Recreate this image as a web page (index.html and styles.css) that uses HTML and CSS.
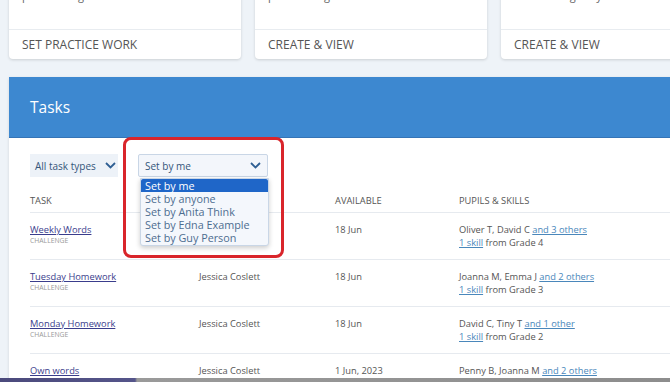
FILE: index.html
```html
<!DOCTYPE html>
<html lang="en">
<head>
  <meta charset="UTF-8">
  <meta name="viewport" content="width=device-width, initial-scale=1.0">
  <title>Tasks</title>
  <link rel="stylesheet" href="styles.css">
</head>
<body>
  <div class="page">
    <div class="cards">
      <div class="card">
        <div class="card-body">practice in games.</div>
        <div class="card-footer">Set practice work</div>
      </div>
      <div class="card">
        <div class="card-body">practice in games.</div>
        <div class="card-footer">Create &amp; view</div>
      </div>
      <div class="card">
        <div class="card-body">the marking for you.</div>
        <div class="card-footer">Create &amp; view</div>
      </div>
    </div>

    <div class="panel">
      <div class="panel-header">
        <h2>Tasks</h2>
      </div>
      <div class="panel-body">
        <div class="filters">
          <div class="filter filter-plain">
            <span>All task types</span>
            <svg class="chevron" width="11" height="7" viewBox="0 0 11 7"><polyline points="1,1 5.5,5.5 10,1" fill="none" stroke="#2f5f93" stroke-width="1.8"/></svg>
          </div>
          <div class="select-wrap">
            <div class="filter filter-select">
              <span>Set by me</span>
              <svg class="chevron" width="11" height="7" viewBox="0 0 11 7"><polyline points="1,1 5.5,5.5 10,1" fill="none" stroke="#2f5f93" stroke-width="1.8"/></svg>
            </div>
            <ul class="dropdown">
              <li class="selected">Set by me</li>
              <li>Set by anyone</li>
              <li>Set by Anita Think</li>
              <li>Set by Edna Example</li>
              <li>Set by Guy Person</li>
            </ul>
            <div class="highlight"></div>
          </div>
        </div>

        <table class="table">
          <thead>
            <tr>
              <th class="col-task">Task</th>
              <th class="col-by">Set by</th>
              <th class="col-date">Available</th>
              <th>Pupils &amp; skills</th>
            </tr>
          </thead>
          <tbody>
            <tr>
              <td><a href="#">Weekly Words</a><div class="type">Challenge</div></td>
              <td>Jessica Coslett</td>
              <td>18 Jun</td>
              <td>Oliver T, David C <a class="more" href="#">and 3 others</a><br><a class="more" href="#">1 skill</a> from Grade 4</td>
            </tr>
            <tr>
              <td><a href="#">Tuesday Homework</a><div class="type">Challenge</div></td>
              <td>Jessica Coslett</td>
              <td>18 Jun</td>
              <td>Joanna M, Emma J <a class="more" href="#">and 2 others</a><br><a class="more" href="#">1 skill</a> from Grade 3</td>
            </tr>
            <tr>
              <td><a href="#">Monday Homework</a><div class="type">Challenge</div></td>
              <td>Jessica Coslett</td>
              <td>18 Jun</td>
              <td>David C, Tiny T <a class="more" href="#">and 1 other</a><br><a class="more" href="#">1 skill</a> from Grade 2</td>
            </tr>
            <tr>
              <td><a href="#">Own words</a><div class="type">Challenge</div></td>
              <td>Jessica Coslett</td>
              <td>1 Jun, 2023</td>
              <td>Penny B, Joanna M <a class="more" href="#">and 2 others</a><br><a class="more" href="#">1 skill</a> from Grade 1</td>
            </tr>
          </tbody>
        </table>
      </div>
    </div>
  </div>
  <div class="taskbar"></div>
</body>
</html>
```

FILE: styles.css
```css
body {
  font-family: "Open Sans", Arial, sans-serif;
  background-color: #eef3f8;
  margin: 0;
  height: 382px;
  overflow: hidden;
  position: relative;
}

.page {
  padding-left: 9px;
  width: 760px;
}

.cards {
  display: flex;
  gap: 14px;
  margin-top: -30px;
}

.card {
  width: 232px;
  background: white;
  border-radius: 4px;
  box-shadow: 0 1px 3px rgba(0, 0, 0, 0.15);
}

.card-body {
  height: 60px;
  box-sizing: border-box;
  padding: 18px 13px 0;
  font-size: 11px;
  line-height: 16px;
  color: #666;
  border-bottom: 1px solid #e8ecf0;
}

.card-footer {
  height: 29px;
  line-height: 29px;
  padding-left: 13px;
  font-size: 12px;
  text-transform: uppercase;
  color: #555;
}

.panel {
  margin-top: 18px;
  background: white;
  box-shadow: 0 1px 3px rgba(0, 0, 0, 0.12);
}

.panel-header {
  height: 60px;
  background-color: #3d88d0;
  border-bottom: 1px solid #3574b6;
  display: flex;
  align-items: center;
  padding-left: 21px;
}

.panel-header h2 {
  margin: 0;
  font-size: 15.5px;
  font-weight: 400;
  color: white;
}

.panel-body {
  padding: 16px 0 0 21px;
}

.filters {
  display: flex;
  gap: 20px;
}

.filter {
  height: 23px;
  box-sizing: border-box;
  display: flex;
  align-items: center;
  justify-content: space-between;
  font-size: 10px;
  color: #34557a;
}

.filter-plain {
  width: 88px;
  padding: 0 2px 0 5px;
  background: #edf2f8;
}

.filter-select {
  width: 130px;
  padding: 0 6px 0 6px;
  background: #f3f6fb;
  border: 1px solid #c9d6e6;
  border-radius: 2px;
}

.select-wrap {
  position: relative;
}

.dropdown {
  position: absolute;
  top: 24px;
  left: 2px;
  width: 127px;
  margin: 0;
  padding: 0 0 1px;
  list-style: none;
  background: #f4f7fc;
  border: 1px solid #c9d6e6;
  border-radius: 0 0 3px 3px;
  box-shadow: 0 2px 5px rgba(0, 0, 0, 0.2);
  z-index: 2;
}

.dropdown li {
  height: 13px;
  line-height: 13px;
  padding-left: 4px;
  font-size: 10.8px;
  color: #4d6d90;
}

.dropdown li.selected {
  background: #1f66c8;
  color: white;
  border-radius: 2px 2px 0 0;
}

.highlight {
  position: absolute;
  top: -17px;
  left: -15px;
  width: 161px;
  height: 121px;
  box-sizing: border-box;
  border: 3px solid #d9252b;
  border-radius: 8px;
  z-index: 3;
}

.table {
  width: 700px;
  border-collapse: collapse;
  margin-top: 12px;
  font-size: 9.3px;
  color: #555;
}

.table th {
  height: 22px;
  padding: 0 0 1px;
  text-align: left;
  font-weight: 400;
  text-transform: uppercase;
  font-size: 9.3px;
  color: #555;
  border-bottom: 1px solid #e6eaef;
}

.col-task {
  width: 169px;
}

.col-by {
  width: 136px;
}

.col-date {
  width: 124px;
}

.table td {
  height: 47px;
  box-sizing: border-box;
  padding: 10px 0 0;
  vertical-align: top;
  line-height: 13px;
  border-bottom: 1px solid #e6eaef;
}

.table td a {
  color: #3a3d8c;
  font-size: 9.3px;
}

.table td a.more {
  color: #4a87bb;
}

.type {
  font-size: 6.8px;
  line-height: 9px;
  text-transform: uppercase;
  color: #9a9a9a;
}

.taskbar {
  position: absolute;
  left: 0;
  right: 0;
  bottom: 0;
  height: 4px;
  background: linear-gradient(to right, #4b4a7c 0, #55558a 135px, #9a9a9a 137px, #8d8d8d 100%);
}
```
